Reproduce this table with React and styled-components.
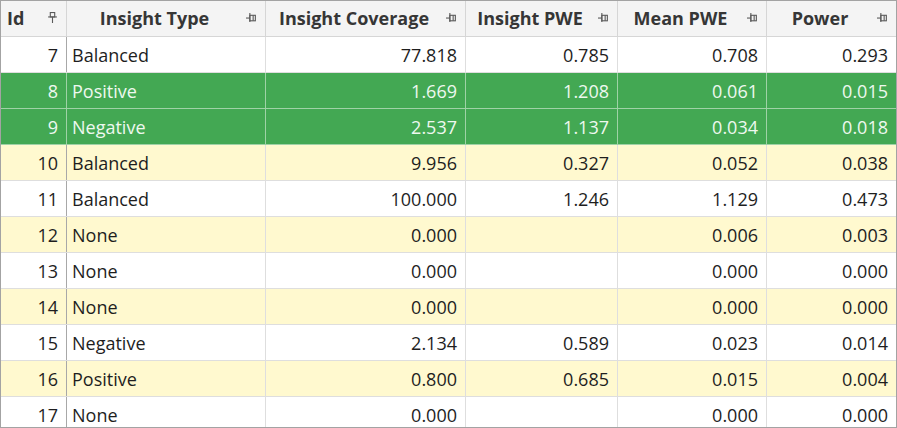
import React from 'react';
import styled, { createGlobalStyle } from 'styled-components';

const GlobalStyle = createGlobalStyle`
  html, body {
    margin: 0;
    padding: 0;
    background: #ffffff;
  }
  body {
    font-family: "Open Sans", "Noto Sans", sans-serif;
  }
`;

const COLS = '66px 199px 200px 152px 149px 129px';

const StyledGrid = styled.div`
  width: 897px;
  height: 428px;
  box-sizing: border-box;
  border: 1px solid #a3a3a3;
  overflow: hidden;
  background: #fff;
`;

const StyledHeaderRow = styled.div`
  display: grid;
  grid-template-columns: ${COLS};
  height: 35px;
  background-color: #f4f4f4;
  border-bottom: 1px solid #d6d6d6;
`;

const StyledHeaderCell = styled.div`
  display: flex;
  align-items: center;
  padding: 0 8px 2px ${(p) => (p.$left ? '6px' : '0')};
  border-right: 1px solid #d6d6d6;
  font-size: 18px;
  font-weight: 700;
  color: #363636;
  &:last-child {
    border-right: none;
  }
`;

const StyledLabel = styled.span`
  flex: 1;
  text-align: ${(p) => (p.$left ? 'left' : 'center')};
  white-space: nowrap;
`;

const StyledPin = styled.svg`
  width: 11px;
  height: 11px;
  flex: none;
  margin-left: 4px;
`;

const StyledRow = styled.div`
  display: grid;
  grid-template-columns: ${COLS};
  height: 35px;
  background-color: ${(p) =>
    p.$tone === 'selected' ? '#43a853' : p.$tone === 'alt' ? '#fff9cf' : '#ffffff'};
  color: ${(p) => (p.$tone === 'selected' ? '#eef8ef' : '#1e1e1e')};
  border-bottom: 1px solid ${(p) => (p.$tone === 'selected' ? '#9fd2a6' : '#dedede')};
`;

const StyledCell = styled.div`
  display: flex;
  align-items: center;
  justify-content: ${(p) => (p.$left ? 'flex-start' : 'flex-end')};
  padding: 0 ${(p) => (p.$left ? '5px' : '8px')};
  font-size: 18px;
  border-right: 1px solid ${(p) => (p.$selected ? '#9fd2a6' : '#dedede')};
  white-space: nowrap;
  &:first-child {
    border-right-color: ${(p) => (p.$selected ? '#9fd2a6' : '#a8a8a8')};
  }
  &:last-child {
    border-right: none;
  }
`;

function PinIcon({ pinned }) {
  return (
    <StyledPin viewBox="0 0 10 10" fill="none" stroke="#5a5a5a" strokeWidth="1">
      {pinned ? (
        <>
          <rect x="3" y="0.5" width="4" height="4" />
          <line x1="1" y1="4.5" x2="9" y2="4.5" />
          <line x1="5" y1="4.5" x2="5" y2="10" />
        </>
      ) : (
        <>
          <line x1="0" y1="5.5" x2="3.5" y2="5.5" />
          <line x1="3.5" y1="1" x2="3.5" y2="9" />
          <rect x="3.5" y="3" width="5" height="5" />
          <line x1="6.5" y1="3" x2="6.5" y2="8" />
        </>
      )}
    </StyledPin>
  );
}

const columns = [
  { title: 'Id', left: true, pinned: true },
  { title: 'Insight Type' },
  { title: 'Insight Coverage' },
  { title: 'Insight PWE' },
  { title: 'Mean PWE' },
  { title: 'Power' },
];

const rows = [
  [7, 'Balanced', '77.818', '0.785', '0.708', '0.293', 'plain'],
  [8, 'Positive', '1.669', '1.208', '0.061', '0.015', 'selected'],
  [9, 'Negative', '2.537', '1.137', '0.034', '0.018', 'selected'],
  [10, 'Balanced', '9.956', '0.327', '0.052', '0.038', 'alt'],
  [11, 'Balanced', '100.000', '1.246', '1.129', '0.473', 'plain'],
  [12, 'None', '0.000', '', '0.006', '0.003', 'alt'],
  [13, 'None', '0.000', '', '0.000', '0.000', 'plain'],
  [14, 'None', '0.000', '', '0.000', '0.000', 'alt'],
  [15, 'Negative', '2.134', '0.589', '0.023', '0.014', 'plain'],
  [16, 'Positive', '0.800', '0.685', '0.015', '0.004', 'alt'],
  [17, 'None', '0.000', '', '0.000', '0.000', 'plain'],
];

function App() {
  return (
    <>
      <GlobalStyle />
      <StyledGrid>
        <StyledHeaderRow>
          {columns.map((c) => (
            <StyledHeaderCell key={c.title} $left={c.left}>
              <StyledLabel $left={c.left}>{c.title}</StyledLabel>
              <PinIcon pinned={c.pinned} />
            </StyledHeaderCell>
          ))}
        </StyledHeaderRow>
        {rows.map(([id, type, cov, pwe, mean, power, tone]) => {
          const sel = tone === 'selected';
          return (
            <StyledRow key={id} $tone={tone}>
              <StyledCell $selected={sel}>{id}</StyledCell>
              <StyledCell $selected={sel} $left>
                {type}
              </StyledCell>
              <StyledCell $selected={sel}>{cov}</StyledCell>
              <StyledCell $selected={sel}>{pwe}</StyledCell>
              <StyledCell $selected={sel}>{mean}</StyledCell>
              <StyledCell $selected={sel}>{power}</StyledCell>
            </StyledRow>
          );
        })}
      </StyledGrid>
    </>
  );
}

export default App;
